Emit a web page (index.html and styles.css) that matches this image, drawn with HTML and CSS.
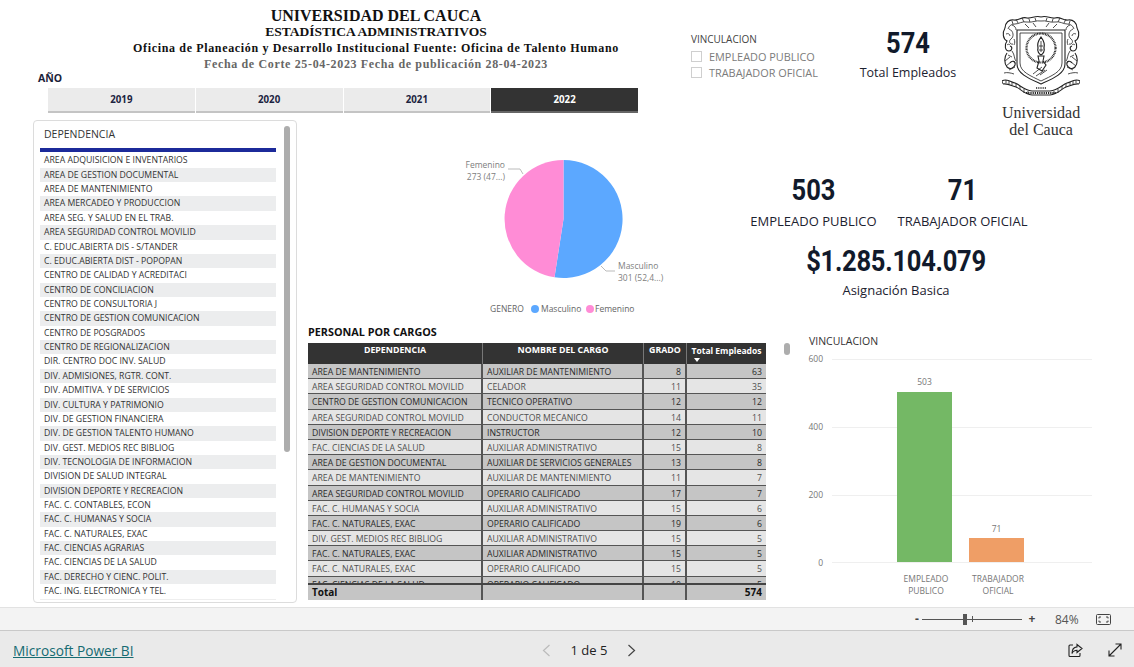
FILE: index.html
```html
<!DOCTYPE html>
<html lang="es">
<head>
<meta charset="utf-8">
<title>Universidad del Cauca - Estadística Administrativos</title>
<link rel="stylesheet" href="styles.css">
</head>
<body>
<main class="report">
  <section class="top">
    <div class="head-left">
      <header class="titles">
        <h1>UNIVERSIDAD DEL CAUCA</h1>
        <h2>ESTADÍSTICA ADMINISTRATIVOS</h2>
        <h3>Oficina de Planeación y Desarrollo Institucional Fuente: Oficina de Talento Humano</h3>
        <h4>Fecha de Corte 25-04-2023 Fecha de publicación 28-04-2023</h4>
      </header>
      <div class="year-label">AÑO</div>
      <div class="years">
        <div class="year">2019</div>
        <div class="year">2020</div>
        <div class="year">2021</div>
        <div class="year on">2022</div>
      </div>
    </div>
    <div class="slicer">
      <div class="slicer-title">VINCULACION</div>
      <div class="check"><span class="box"></span>EMPLEADO PUBLICO</div>
      <div class="check"><span class="box"></span>TRABAJADOR OFICIAL</div>
    </div>
    <div class="kpi kpi-total">
      <div class="num">574</div>
      <div class="lab">Total Empleados</div>
    </div>
    <div class="logo">
      <svg class="crest" width="78" height="84" viewBox="0 0 78 84" fill="none" stroke="#222" stroke-width=".8">
        <g id="half">
          <path stroke-width="1.100" d="M39 2C33 0 30 4 25 3 20 1 17 6 12 5 7 4 3 8 3 13"/>
          <path d="M39 6C34 5 30 8 25 7 20 6 17 9 13 9 9 9 7 11 6 14M14 4l2 4M20 3l2 4M27 4l1 3M33 3l1 3M10 6l1 3M23 9l4 4M31 8l3 4"/>
          <path stroke-width="1.100" d="M3 13C0 18 1 24 5 26 2 30 3 36 7 36 10 36 11 32 8 31"/>
          <path d="M7 14C12 16 12 22 9 24 6 26 8 30 11 29M4 19c2-1 4 0 4 2M5 30c1-1 2-1 3 0M10 10c3 1 4 3 4 5M12 24c1 2 1 4 0 6"/>
          <path stroke-width="1.100" d="M5 38C2 42 2 48 5 52 8 55 12 53 13 50 14 46 10 45 8 48"/>
          <path d="M10 36C13 40 12 44 14 46M3 46L8 42M4 51L9 47M7 55l6-3M6 40l4 2M2 58c3-1 7 0 10 1"/>
          <path stroke-width="1.100" d="M0 66C5 63 9 67 13 68 18 70 22 75 30 76L39 76M1 69C6 68 10 71 14 72 19 74 22 79 30 80L39 80"/>
          <path d="M0 66L1 69M4 65l0 3M7 66l0 3M10 67l0 3M14 69l0 3M18 71l0 3M22 74l0 4M26 76l0 3"/>
        </g>
        <use href="#half" transform="translate(78 0) scale(-1 1)"/>
        <path stroke-width="1.100" d="M15 15H63V49C63 59 50 64 39 69 28 64 15 59 15 49Z"/>
        <path d="M18 18H60V48C60 57 49 61 39 66 29 61 18 57 18 48Z"/>
        <circle cx="39" cy="33" r="14.500" stroke-width="2.200" stroke-dasharray=".9 .7"/>
        <path stroke-width="1.200" d="M39 22C42 26 43 29 42 33 43 36 41 39 39 40 37 39 35 36 36 33 35 29 36 26 39 22Z"/>
        <path d="M39 26V37M37 31h4M37 35h4"/>
        <path stroke-width="1.100" d="M36 41H42L41 46 44 50 40 56 35 53 37 46Z"/>
        <path d="M31 59L40 52M34 61L43 55M38 60L45 55"/>
        <path stroke-width="1.600" stroke-dasharray="1 .8" d="M34 73H44"/>
        <path stroke-width="1.900" stroke-dasharray="1.200 1" d="M24 78H54"/>
      </svg>
      <div class="logo-text">Universidad<br>del Cauca</div>
    </div>
  </section>

  <section class="bottom">
    <aside class="dep">
      <div class="dep-title">DEPENDENCIA</div>
      <div class="dep-rule"></div>
      <ul class="dep-list">
        <li>AREA ADQUISICION E INVENTARIOS</li>
        <li>AREA DE GESTION DOCUMENTAL</li>
        <li>AREA DE MANTENIMIENTO</li>
        <li>AREA MERCADEO Y PRODUCCION</li>
        <li>AREA SEG. Y SALUD EN EL TRAB.</li>
        <li>AREA SEGURIDAD CONTROL MOVILID</li>
        <li>C. EDUC.ABIERTA DIS - S/TANDER</li>
        <li>C. EDUC.ABIERTA DIST - POPOPAN</li>
        <li>CENTRO DE CALIDAD Y ACREDITACI</li>
        <li>CENTRO DE CONCILIACION</li>
        <li>CENTRO DE CONSULTORIA J</li>
        <li>CENTRO DE GESTION COMUNICACION</li>
        <li>CENTRO DE POSGRADOS</li>
        <li>CENTRO DE REGIONALIZACION</li>
        <li>DIR. CENTRO DOC INV. SALUD</li>
        <li>DIV. ADMISIONES, RGTR. CONT.</li>
        <li>DIV. ADMITIVA. Y DE SERVICIOS</li>
        <li>DIV. CULTURA Y PATRIMONIO</li>
        <li>DIV. DE GESTION FINANCIERA</li>
        <li>DIV. DE GESTION TALENTO HUMANO</li>
        <li>DIV. GEST. MEDIOS REC BIBLIOG</li>
        <li>DIV. TECNOLOGIA DE INFORMACION</li>
        <li>DIVISION DE SALUD INTEGRAL</li>
        <li>DIVISION DEPORTE Y RECREACION</li>
        <li>FAC. C. CONTABLES, ECON</li>
        <li>FAC. C. HUMANAS Y SOCIA</li>
        <li>FAC. C. NATURALES, EXAC</li>
        <li>FAC. CIENCIAS AGRARIAS</li>
        <li>FAC. CIENCIAS DE LA SALUD</li>
        <li>FAC. DERECHO Y CIENC. POLIT.</li>
        <li>FAC. ING. ELECTRONICA Y TEL.</li>
      </ul>
      <div class="dep-scroll"></div>
    </aside>

    <div class="mid">
      <svg class="pie" width="458" height="205" viewBox="308 120 458 205">
        <path class="p-blue" d="M563.5 160A59 59 0 1 1 554.5 277.3L563.5 219Z"/>
        <path class="p-pink" d="M554.5 277.3A59 59 0 0 1 563.5 160L563.5 219Z"/>
        <path class="leader" d="M508 169H520L523 174M601 266L606 271H615"/>
        <text class="plabel" x="505" y="168" text-anchor="end">Femenino</text>
        <text class="plabel" x="505" y="180" text-anchor="end">273 (47...)</text>
        <text class="plabel" x="618" y="269">Masculino</text>
        <text class="plabel" x="618" y="281">301 (52,4...)</text>
        <text class="plegend" x="490" y="312">GENERO</text>
        <circle class="p-blue" cx="535" cy="309" r="4"/>
        <text class="plegend" x="541" y="312">Masculino</text>
        <circle class="p-pink" cx="590" cy="309" r="4"/>
        <text class="plegend" x="595" y="312">Femenino</text>
      </svg>
      <div class="tbl-title">PERSONAL POR CARGOS</div>
      <div class="tbl">
        <div class="tr th">
          <div class="c1">DEPENDENCIA</div>
          <div class="c2">NOMBRE DEL CARGO</div>
          <div class="c3">GRADO</div>
          <div class="c4">Total Empleados<span class="sort"></span></div>
        </div>
        <div class="tbody">
          <div class="tr"><div>AREA DE MANTENIMIENTO</div><div>AUXILIAR DE MANTENIMIENTO</div><div class="n">8</div><div class="n">63</div></div>
          <div class="tr"><div>AREA SEGURIDAD CONTROL MOVILID</div><div>CELADOR</div><div class="n">11</div><div class="n">35</div></div>
          <div class="tr"><div>CENTRO DE GESTION COMUNICACION</div><div>TECNICO OPERATIVO</div><div class="n">12</div><div class="n">12</div></div>
          <div class="tr"><div>AREA SEGURIDAD CONTROL MOVILID</div><div>CONDUCTOR MECANICO</div><div class="n">14</div><div class="n">11</div></div>
          <div class="tr"><div>DIVISION DEPORTE Y RECREACION</div><div>INSTRUCTOR</div><div class="n">12</div><div class="n">10</div></div>
          <div class="tr"><div>FAC. CIENCIAS DE LA SALUD</div><div>AUXILIAR ADMINISTRATIVO</div><div class="n">15</div><div class="n">8</div></div>
          <div class="tr"><div>AREA DE GESTION DOCUMENTAL</div><div>AUXILIAR DE SERVICIOS GENERALES</div><div class="n">13</div><div class="n">8</div></div>
          <div class="tr"><div>AREA DE MANTENIMIENTO</div><div>AUXILIAR DE MANTENIMIENTO</div><div class="n">11</div><div class="n">7</div></div>
          <div class="tr"><div>AREA SEGURIDAD CONTROL MOVILID</div><div>OPERARIO CALIFICADO</div><div class="n">17</div><div class="n">7</div></div>
          <div class="tr"><div>FAC. C. HUMANAS Y SOCIA</div><div>AUXILIAR ADMINISTRATIVO</div><div class="n">15</div><div class="n">6</div></div>
          <div class="tr"><div>FAC. C. NATURALES, EXAC</div><div>OPERARIO CALIFICADO</div><div class="n">19</div><div class="n">6</div></div>
          <div class="tr"><div>DIV. GEST. MEDIOS REC BIBLIOG</div><div>AUXILIAR ADMINISTRATIVO</div><div class="n">15</div><div class="n">5</div></div>
          <div class="tr"><div>FAC. C. NATURALES, EXAC</div><div>AUXILIAR ADMINISTRATIVO</div><div class="n">15</div><div class="n">5</div></div>
          <div class="tr"><div>FAC. C. NATURALES, EXAC</div><div>OPERARIO CALIFICADO</div><div class="n">15</div><div class="n">5</div></div>
          <div class="tr"><div>FAC. CIENCIAS DE LA SALUD</div><div>OPERARIO CALIFICADO</div><div class="n">10</div><div class="n">5</div></div>
        </div>
        <div class="tr tf"><div>Total</div><div></div><div></div><div class="n">574</div></div>
      </div>
    </div>

    <div class="right">
      <div class="kpi-row">
        <div class="kpi"><div class="num">503</div><div class="lab">EMPLEADO PUBLICO</div></div>
        <div class="kpi"><div class="num">71</div><div class="lab">TRABAJADOR OFICIAL</div></div>
      </div>
      <div class="kpi kpi-money">
        <div class="num">$1.285.104.079</div>
        <div class="lab">Asignación Basica</div>
      </div>
      <div class="chart-wrap">
        <div class="mini-scroll"></div>
        <svg class="bars" width="354" height="277" viewBox="780 330 354 277">
          <text class="ctitle" x="809" y="345">VINCULACION</text>
          <path class="grid" d="M832 359.500H1092M832 427.500H1092M832 495.500H1092M832 562.500H1092"/>
          <text class="axis" x="823" y="362" text-anchor="end">600</text>
          <text class="axis" x="823" y="430" text-anchor="end">400</text>
          <text class="axis" x="823" y="498" text-anchor="end">200</text>
          <text class="axis" x="823" y="566" text-anchor="end">0</text>
          <rect class="b-green" x="897" y="392" width="55" height="170"/>
          <rect class="b-orange" x="969" y="538" width="55" height="24"/>
          <text class="vlab" x="924.500" y="385" text-anchor="middle">503</text>
          <text class="vlab" x="996.500" y="532" text-anchor="middle">71</text>
          <text class="axis" x="926" y="582" text-anchor="middle">EMPLEADO</text>
          <text class="axis" x="926" y="594" text-anchor="middle">PUBLICO</text>
          <text class="axis" x="998" y="582" text-anchor="middle">TRABAJADOR</text>
          <text class="axis" x="998" y="594" text-anchor="middle">OFICIAL</text>
        </svg>
      </div>
    </div>
  </section>
</main>

<div class="zoombar">
  <span class="zbtn">-</span>
  <span class="slider"><span class="tick"></span><span class="thumb"></span></span>
  <span class="zbtn plus">+</span>
  <span class="zpct">84%</span>
  <svg class="fit" width="15" height="11" viewBox="0 0 15 11" fill="none" stroke="#444">
    <rect x=".5" y=".5" width="14" height="10" rx="1"/>
    <path d="M3 4.500V3H5M10 3h2v1.500M12 6.500V8h-2M5 8H3V6.500"/>
  </svg>
</div>

<footer class="footer">
  <a class="brand" href="#">Microsoft Power BI</a>
  <nav class="pager">
    <svg width="9" height="13" viewBox="0 0 9 13" fill="none" stroke="#bbb" stroke-width="1.200"><path d="M7.500 1L1.500 6.500L7.500 12"/></svg>
    <span class="page-text">1 de 5</span>
    <svg width="9" height="13" viewBox="0 0 9 13" fill="none" stroke="#444" stroke-width="1.200"><path d="M1.500 1L7.500 6.500L1.500 12"/></svg>
  </nav>
  <div class="foot-icons">
    <svg width="15" height="15" viewBox="0 0 15 15" fill="none" stroke="#222" stroke-width="1.100"><path d="M5 2H2a1 1 0 0 0-1 1v9.500a1 1 0 0 0 1 1h9a1 1 0 0 0 1-1V10"/><path d="M9 1.500l5 4-5 4V7.300C6.500 7.300 5 8.300 4 10.500 4 7 6 4.200 9 3.900z"/></svg>
    <svg width="14" height="14" viewBox="0 0 14 14" fill="none" stroke="#222" stroke-width="1.100"><path d="M1 13L13 1M7.500 1H13V6.500M1 7.500V13H6.500"/></svg>
  </div>
</footer>
</body>
</html>
```

FILE: styles.css
```css
* { box-sizing: border-box; }
html, body { margin: 0; padding: 0; }
body {
  width: 1134px;
  height: 667px;
  overflow: hidden;
  background: #fff;
  font-family: "Open Sans", "Noto Sans", sans-serif;
  color: #222;
  display: flex;
  flex-direction: column;
}
.report { flex: 0 0 607px; display: flex; flex-direction: column; overflow: hidden; }

/* top band */
.top { flex: 0 0 120px; height: 120px; min-height: 0; display: flex; position: relative; z-index: 1; }
.head-left { flex: 0 0 660px; width: 660px; min-width: 0; }
.titles { width: 752px; padding-top: 7px; text-align: center; }
.titles h1, .titles h2, .titles h3, .titles h4 {
  margin: 0;
  font-family: "Liberation Serif", serif;
  font-weight: 700;
  white-space: nowrap;
}
.titles h1 { font-size: 16px; line-height: 18px; color: #111; }
.titles h2 { font-size: 13.500px; line-height: 14px; color: #111; }
.titles h3 { font-size: 12px; line-height: 18px; color: #111; letter-spacing: .65px; }
.titles h4 { font-size: 12px; line-height: 15px; color: #666; letter-spacing: .65px; }
.year-label { margin: 0 0 0 38px; font-size: 10.500px; line-height: 12px; font-weight: 700; color: #1a2238; }
.years { display: flex; gap: 1px; margin: 4px 0 0 48px; width: 590px; }
.year {
  flex: 1;
  height: 25px;
  line-height: 23px;
  text-align: center;
  background: #ebebeb;
  border-bottom: 2px solid #c4c4c4;
  font-size: 9.700px;
  font-weight: 700;
  color: #1b2340;
}
.year.on { background: #333; color: #fff; border-bottom-color: #666; }

.slicer { flex: 0 0 150px; margin-left: 31px; padding-top: 33px; }
.slicer-title { font-size: 10px; line-height: 13px; color: #444; margin-bottom: 3px; }
.check { display: flex; align-items: center; height: 15.500px; font-size: 10.900px; color: #7b7b7b; white-space: nowrap; }
.box { width: 11px; height: 11px; border: 1px solid #cfcfcf; margin-right: 7px; }

.kpi { text-align: center; }
.kpi-total { flex: 0 0 134px; padding-top: 25px; }
.num {
  font-family: Roboto, "Liberation Sans", sans-serif;
  font-weight: 700;
  font-size: 29px;
  line-height: 36px;
  color: #111a2b;
  transform: scaleX(.88);
}
.lab { font-size: 13px; line-height: 18px; color: #1c2230; white-space: nowrap; }
.kpi-total .lab { margin-top: 3px; font-size: 12.500px; }

.logo { flex: 0 0 78px; margin-left: 27px; padding-top: 15px; text-align: center; }
.crest { display: block; }
.logo-text {
  margin-top: 5px;
  font-family: "Liberation Serif", serif;
  font-size: 16px;
  line-height: 17px;
  color: #333;
  white-space: nowrap;
}

/* lower band */
.bottom { flex: 1; display: flex; padding-left: 33px; min-height: 0; }

.dep {
  position: relative;
  flex: 0 0 264px;
  height: 483px;
  border: 1px solid #dcdcdc;
  border-radius: 4px;
  padding: 0 20px 0 6px;
  overflow: hidden;
}
.dep-title { padding: 5px 0 0 4px; height: 27px; font-size: 10.500px; line-height: 17px; color: #333; }
.dep-rule { height: 4px; background: #1c2a9a; }
.dep-list { list-style: none; margin: 0; padding: 1.400px 0 0; border-bottom: 1px solid #eee; }
.dep-list li {
  height: 14.370px;
  line-height: 14.370px;
  padding-left: 4px;
  font-size: 8.700px;
  color: #333;
  white-space: nowrap;
}
.dep-list li:nth-child(even) { background: #ecedee; }
.dep-scroll {
  position: absolute;
  top: 5px;
  right: 6px;
  width: 6px;
  height: 326px;
  border-radius: 3px;
  background: #adadad;
}

.mid { flex: 0 0 458px; margin-left: 11px; }
.pie { display: block; }
.p-blue { fill: #5ca8ff; }
.p-pink { fill: #ff8cd6; }
.leader { fill: none; stroke: #bbb; stroke-width: 1; }
.plabel { font-size: 8.500px; fill: #808080; }
.plegend { font-size: 8.500px; fill: #666; }
.tbl-title { height: 18px; line-height: 14px; font-size: 10.800px; font-weight: 700; color: #111; }
.tbl { width: 458px; }
.tr {
  display: grid;
  grid-template-columns: 175px 161px 43px 79px;
  height: 15.200px;
  font-size: 8.700px;
  line-height: 16px;
  border-bottom: 1px solid #555;
  color: #3a3a3a;
}
.tr > div {
  padding: 0 4px;
  border-right: 2px solid #555;
  white-space: nowrap;
  overflow: hidden;
}
.tr > div:last-child { border-right: 0; }
.tr > .n { text-align: right; }
.tbody { height: 219px; overflow: hidden; }
.tbody .tr:nth-child(odd) { background: #c5c5c5; color: #2a2a2a; }
.tbody .tr:nth-child(even) { background: #e5e5e5; color: #505050; }
.th { height: 21px; background: #333; color: #fff; font-weight: 700; font-size: 8.800px; text-align: center; line-height: 15px; border: 0; }
.th > div { border-right: 1px solid #777; position: relative; }
.th .c4 { padding: 0 2px; font-size: 8.500px; }
.sort {
  position: absolute;
  left: 7px;
  top: 15px;
  border: 3px solid transparent;
  border-top: 4px solid #fff;
  border-bottom: 0;
}
.tf { height: 17px; line-height: 15px; font-size: 10px; background: #c5c5c5; font-weight: 700; color: #111; border-bottom: 0; border-top: 2px solid #444; }

.right { flex: 0 0 354px; margin-left: 14px; min-width: 0; }
.kpi-row { display: flex; padding-top: 52px; margin-left: -41px; }
.kpi-row .kpi { flex: 0 0 149px; }
.kpi-row .lab { margin-top: 4px; }
.kpi-money { width: 232px; margin-top: 13px; }
.kpi-money .num { letter-spacing: -.3px; }
.kpi-money .lab { margin-top: 2px; }
.chart-wrap { position: relative; margin-top: 31px; }
.bars { position: absolute; left: 0; top: 0; display: block; }
.mini-scroll {
  position: absolute;
  left: 4px;
  top: 13px;
  width: 6px;
  height: 12px;
  border-radius: 3px;
  background: #adadad;
  z-index: 1;
}
.ctitle { font-size: 10.500px; fill: #333; }
.grid { stroke: #efefef; stroke-width: 1; fill: none; }
.axis { font-size: 8.500px; fill: #777; }
.vlab { font-size: 8.500px; fill: #777; }
.b-green { fill: #74b865; }
.b-orange { fill: #ef9e66; }

/* zoom bar */
.zoombar {
  flex: 0 0 24px;
  display: flex;
  align-items: center;
  background: #f3f3f3;
  border-top: 1px solid #e2e2e2;
  border-bottom: 1px solid #c9c9c9;
  padding-left: 912px;
  font-size: 12px;
  color: #444;
}
.zbtn { width: 10px; text-align: center; font-weight: 700; line-height: 14px; }
.slider { position: relative; width: 100px; height: 1px; background: #555; }
.tick { position: absolute; left: 50px; top: -3px; width: 1px; height: 6px; background: #555; }
.thumb { position: absolute; left: 41px; top: -5px; width: 4px; height: 11px; background: #555; }
.plus { margin-left: 5px; }
.zpct { margin-left: 18px; width: 30px; font-size: 12px; color: #555; }
.fit { margin-left: 11px; }

/* footer */
.footer { flex: 1; display: flex; align-items: center; background: #eaeaea; padding: 2px 0 0 13px; }
.brand { width: 529px; font-size: 13.700px; color: #156b72; text-decoration: underline; }
.pager { display: flex; align-items: center; width: 94px; }
.page-text { width: 76px; text-align: center; font-size: 13px; font-weight: 500; color: #222; }
.foot-icons { display: flex; align-items: center; gap: 25px; margin-left: 432px; }
```
